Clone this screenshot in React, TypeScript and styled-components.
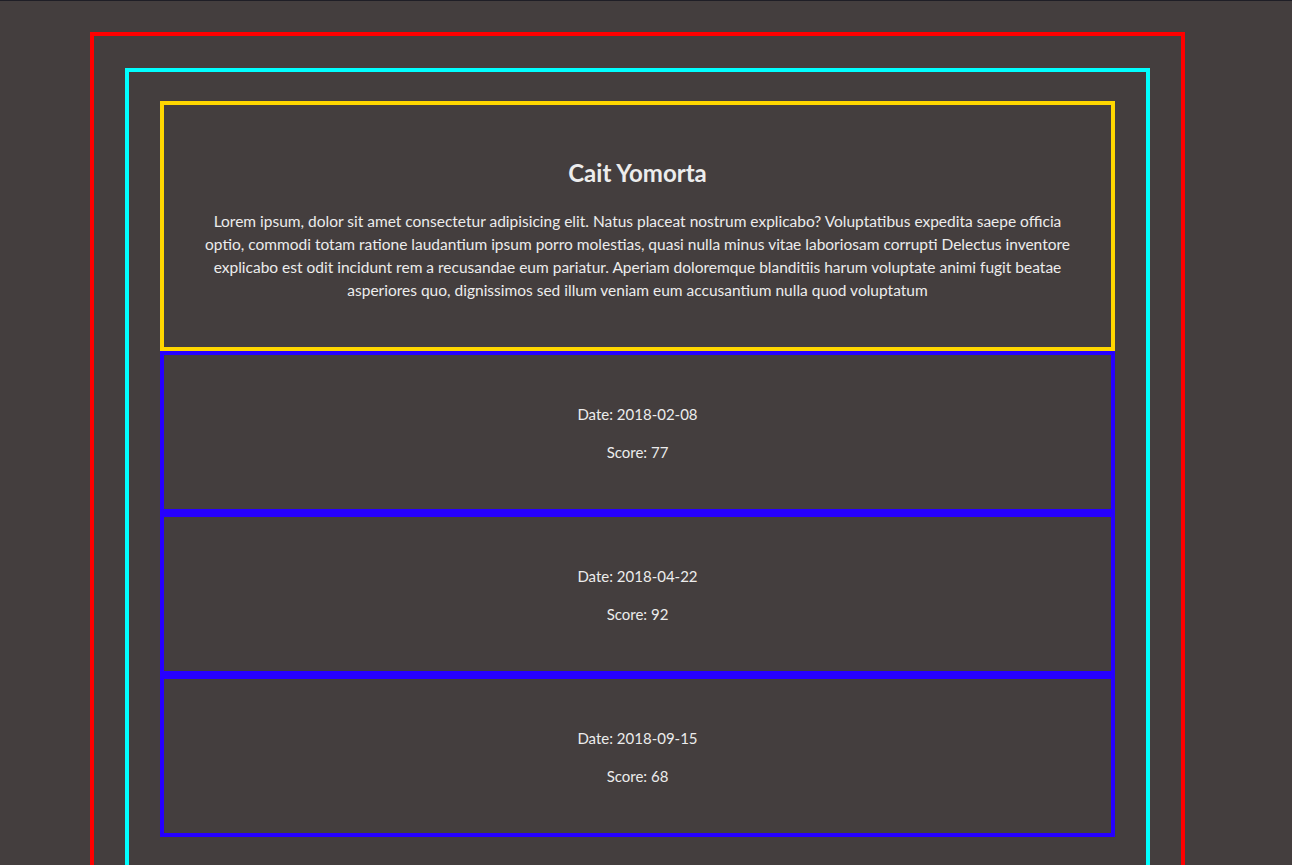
import styled, { createGlobalStyle } from "styled-components";

const GlobalStyle = createGlobalStyle`
  html, body {
    margin: 0;
    padding: 0;
    background: #443e3e;
  }
  body {
    border-top: 1px solid #1f1e26;
    font-family: Lato, "Noto Sans", sans-serif;
    color: #ececec;
  }
`

const Page = styled.main`
  padding: 31px 0 40px 90px;
`
const Outer = styled.section`
  width: 1095px;
  box-sizing: border-box;
  border: 4px solid #ff0000;
  padding: 32px 31px 40px 31px;
`
const Inner = styled.div`
  border: 4px solid #00ffff;
  padding: 29px 31px 40px 31px;
`
const Profile = styled.header`
  border: 4px solid #ffd700;
  height: 242px;
  box-sizing: content-box;
  padding: 0 36px;
  text-align: center;
`
const Name = styled.h2`
  margin: 0;
  padding-top: 54px;
  font-size: 24px;
  line-height: 28px;
  font-weight: 700;
`
const Bio = styled.p`
  margin: 23px 0 0;
  font-size: 15.5px;
  line-height: 23px;
`
const Entry = styled.article`
  border: 4px solid #2600ff;
  height: 152px;
  box-sizing: content-box;
  display: flex;
  flex-direction: column;
  justify-content: center;
  align-items: center;
  gap: 16px;
  font-size: 15px;
  line-height: 22px;
  padding-top: 2px;
`
const Line = styled.p`
  margin: 0;
`

const results = [
  { date: "2018-02-08", score: 77 },
  { date: "2018-04-22", score: 92 },
  { date: "2018-09-15", score: 68 },
];

export default function App() {
  return (
    <>
      <GlobalStyle />
      <Page>
        <Outer>
          <Inner>
            <Profile>
              <Name>Cait Yomorta</Name>
              <Bio>
                Lorem ipsum, dolor sit amet consectetur adipisicing elit. Natus placeat nostrum explicabo? Voluptatibus expedita saepe officia
                optio, commodi totam ratione laudantium ipsum porro molestias, quasi nulla minus vitae laboriosam corrupti Delectus inventore
                explicabo est odit incidunt rem a recusandae eum pariatur. Aperiam doloremque blanditiis harum voluptate animi fugit beatae
                asperiores quo, dignissimos sed illum veniam eum accusantium nulla quod voluptatum
              </Bio>
            </Profile>
            {results.map((r) => (
              <Entry key={r.date}>
                <Line>Date: {r.date}</Line>
                <Line>Score: {r.score}</Line>
              </Entry>
            ))}
          </Inner>
        </Outer>
      </Page>
    </>
  )
}
